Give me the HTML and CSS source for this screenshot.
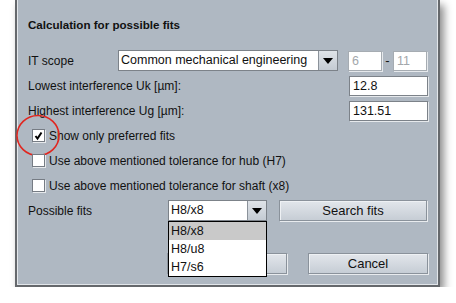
FILE: index.html
```html
<!DOCTYPE html>
<html lang="en">
<head>
    <meta charset="UTF-8">
    <title>Calculation for possible fits</title>
    <link rel="stylesheet" href="styles.css">
</head>
<body>

    <div class="dialog">
        <div class="panel">
            <h1 class="title">Calculation for possible fits</h1>

            <div class="row">
                <span class="label label-it">IT scope</span>
                <div class="combo combo-wide">
                    <span class="combo-text">Common mechanical engineering</span>
                    <span class="combo-btn"><span class="arrow"></span></span>
                </div>
                <span class="field field-small disabled">6</span>
                <span class="dash">-</span>
                <span class="field field-small disabled">11</span>
            </div>

            <div class="row">
                <span class="label grow">Lowest interference Uk [µm]:</span>
                <span class="field field-value">12.8</span>
            </div>

            <div class="row">
                <span class="label grow">Highest interference Ug [µm]:</span>
                <span class="field field-value">131.51</span>
            </div>

            <div class="row">
                <span class="check checked">
                    <svg width="11" height="11" viewBox="0 0 11 11"><path d="M2.5 6 L4.5 8.5 L8.5 2.5" fill="none" stroke="#000" stroke-width="2"/></svg>
                </span>
                <span class="label">Show only preferred fits</span>
                <!-- annotation -->
                <svg class="ring" width="46" height="43" viewBox="0 0 46 43"><ellipse cx="23" cy="21.5" rx="21" ry="20" fill="none" stroke="#e1261f" stroke-width="1.6"/></svg>
            </div>

            <div class="row">
                <span class="check"></span>
                <span class="label">Use above mentioned tolerance for hub (H7)</span>
            </div>

            <div class="row">
                <span class="check"></span>
                <span class="label">Use above mentioned tolerance for shaft (x8)</span>
            </div>

            <div class="row">
                <span class="label label-fits">Possible fits</span>
                <div class="combo combo-fits">
                    <span class="combo-text">H8/x8</span>
                    <span class="combo-btn"><span class="arrow"></span></span>
                    <ul class="popup">
                        <li class="selected">H8/x8</li>
                        <li>H8/u8</li>
                        <li>H7/s6</li>
                    </ul>
                </div>
                <button class="btn btn-search">Search fits</button>
            </div>

            <div class="row row-actions">
                <button class="btn btn-action">OK</button>
                <button class="btn btn-action">Cancel</button>
            </div>
        </div>
    </div>

</body>
</html>
```

FILE: styles.css
```css
body {
    margin: 0;
    padding: 0 0 0 15px;
    background: #ffffff;
    font-family: "Liberation Sans", Arial, sans-serif;
    color: #111;
}

.dialog {
    width: 421px;
    border: 2px solid #65686c;
    border-top: none;
    box-shadow: 4px 5px 8px rgba(0, 0, 0, 0.45);
}

.panel {
    position: relative;
    background: #afb8c2;
    border: 1px solid #e2e6ea;
    border-top: none;
    padding: 0 9px 8px 10px;
    height: 276px;
}

.title {
    margin: 0;
    height: 48px;
    line-height: 49px;
    font-size: 11.6px;
    font-weight: bold;
}

.row {
    position: relative;
    display: flex;
    align-items: center;
    height: 25px;
    font-size: 12px;
}

.label {
    white-space: nowrap;
}

.grow {
    flex: 1;
}

.label-it {
    width: 90px;
}

.label-fits {
    width: 140px;
}

/* text fields */
.field {
    box-sizing: border-box;
    height: 20px;
    line-height: 18px;
    padding: 0 3px;
    background: #fff;
    border: 1px solid #7c8289;
    box-shadow: 1px 1px 0 #e6e9ec;
    font-size: 12.5px;
}

.field-value {
    width: 79px;
}

.field-small {
    width: 34px;
}

.disabled {
    color: #a3a7ab;
    border-color: #a6acb2;
}

.dash {
    width: 11px;
    text-align: center;
    font-size: 13px;
}

/* combo boxes */
.combo {
    position: relative;
    display: flex;
    box-sizing: border-box;
    height: 21px;
    background: #fff;
    border: 1px solid #7c8289;
    font-size: 12.5px;
}

.combo-wide {
    width: 220px;
    margin-right: 10px;
}

.combo-fits {
    width: 99px;
    margin-right: 12px;
}

.combo-text {
    flex: 1;
    padding-left: 2px;
    line-height: 19px;
}

.combo-btn {
    width: 18px;
    display: flex;
    align-items: center;
    justify-content: center;
    border-left: 1px solid #8b929a;
    background: linear-gradient(#dfe3e8, #c4cbd3);
}

.arrow {
    width: 0;
    height: 0;
    border-left: 5px solid transparent;
    border-right: 5px solid transparent;
    border-top: 6px solid #000;
}

.popup {
    position: absolute;
    left: -1px;
    top: 20px;
    width: 97px;
    margin: 0;
    padding: 0;
    list-style: none;
    background: #fff;
    border: 1px solid #000;
    z-index: 2;
}

.popup li {
    height: 18px;
    line-height: 18px;
    padding-left: 2px;
}

.popup .selected {
    background: #c9c9c9;
}

/* checkboxes */
.check {
    box-sizing: border-box;
    width: 13px;
    height: 13px;
    margin: 0 4px 0 4px;
    background: #fff;
    border: 1px solid #767c84;
    box-shadow: 1px 1px 0 #e6e9ec;
    display: flex;
    align-items: center;
    justify-content: center;
}

.ring {
    position: absolute;
    left: -13px;
    top: -9px;
}

/* buttons */
.btn {
    box-sizing: border-box;
    height: 21px;
    padding: 0;
    font-family: "Liberation Sans", Arial, sans-serif;
    font-size: 13px;
    color: #111;
    border: 1px solid #8a929b;
    box-shadow: 1px 1px 0 #e8ebee, inset 1px 1px 0 #eef1f4;
    background: linear-gradient(#e2e6eb, #c6cdd5);
}

.btn-search {
    width: 148px;
}

.row-actions {
    margin-top: 28px;
    padding-left: 139px;
    gap: 21px;
}

.btn-action {
    width: 120px;
}
```
